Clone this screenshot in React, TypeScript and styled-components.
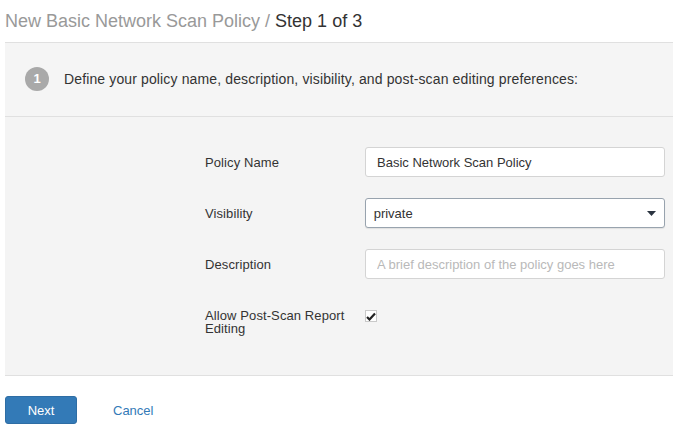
import React from 'react';
import styled, { createGlobalStyle } from 'styled-components';

const GlobalStyle = createGlobalStyle`
  body {
    margin: 0;
    background: #fff;
    font-family: "Liberation Sans", Arial, sans-serif;
    color: #333;
  }
`;

const Page = styled.div`
  padding-left: 5px;
  width: 668px;
`;

const Title = styled.h1`
  margin: 11px 0 11px;
  font-size: 18px;
  line-height: 20px;
  font-weight: normal;
  color: #999;
`;

const Current = styled.span`
  color: #333;
`;

const Panel = styled.div`
  border-top: 1px solid #e0e0e0;
  border-bottom: 1px solid #e0e0e0;
  background: #f4f4f4;
`;

const StepHeader = styled.div`
  display: flex;
  align-items: center;
  height: 74px;
  padding: 0 0 2px 20px;
  box-sizing: border-box;
  background: #f5f5f5;
  border-bottom: 1px solid #e0e0e0;
`;

const StepBadge = styled.span`
  width: 24px;
  height: 24px;
  border-radius: 50%;
  background: #a9a9a9;
  color: #fff;
  font-size: 13px;
  font-weight: bold;
  display: flex;
  align-items: center;
  justify-content: center;
  margin-right: 15px;
`;

const StepText = styled.span`
  font-size: 14px;
  letter-spacing: 0.13px;
`;

const Form = styled.div`
  padding: 30px 8px 40px 200px;
  display: flex;
  flex-direction: column;
  gap: 21px;
`;

const Row = styled.div<{ $top?: boolean }>`
  display: flex;
  align-items: ${p => (p.$top ? 'flex-start' : 'center')};
  padding-top: ${p => (p.$top ? '9px' : '0')};
`;

const Label = styled.label`
  width: 160px;
  padding-right: 16px;
  box-sizing: border-box;
  font-size: 13px;
  line-height: 13px;
  letter-spacing: 0.1px;
`;

const Input = styled.input`
  width: 300px;
  height: 30px;
  box-sizing: border-box;
  border: 1px solid #d4d4d4;
  border-radius: 3px;
  background: #fff;
  padding: 0 11px;
  font-family: "Liberation Sans", Arial, sans-serif;
  font-size: 13px;
  color: #333;
  outline: none;
  &::placeholder {
    color: #b9b9b9;
  }
`;

const Select = styled.div`
  width: 301px;
  height: 30px;
  box-sizing: border-box;
  border: 1px solid #98a3ae;
  border-radius: 3px;
  background: #fff;
  box-shadow: 0 1px 1px rgba(0, 0, 0, 0.08);
  padding: 0 8px 0 8px;
  display: flex;
  align-items: center;
  justify-content: space-between;
  font-size: 13px;
`;

const Check = styled.span`
  width: 12px;
  height: 12px;
  box-sizing: border-box;
  border: 1px solid #c9c9c9;
  background: #fff;
  display: flex;
  align-items: center;
  justify-content: center;
  margin-top: 1px;
`;

const Actions = styled.div`
  display: flex;
  align-items: center;
  margin-top: 20px;
`;

const Primary = styled.button`
  width: 72px;
  height: 28px;
  border: 1px solid #2e6da4;
  border-radius: 3px;
  background: #337ab7;
  color: #fff;
  font-family: "Liberation Sans", Arial, sans-serif;
  font-size: 13px;
`;

const LinkButton = styled.a`
  margin-left: 36px;
  color: #337ab7;
  font-size: 13px;
  text-decoration: none;
`;

export default function App() {
  return (
    <Page>
      <GlobalStyle />
      <Title>
        New Basic Network Scan Policy / <Current>Step 1 of 3</Current>
      </Title>
      <Panel>
        <StepHeader>
          <StepBadge>1</StepBadge>
          <StepText>Define your policy name, description, visibility, and post-scan editing preferences:</StepText>
        </StepHeader>
        <Form>
          <Row>
            <Label>Policy Name</Label>
            <Input readOnly value="Basic Network Scan Policy" />
          </Row>
          <Row>
            <Label>Visibility</Label>
            <Select>
              <span>private</span>
              <svg width="9" height="5" viewBox="0 0 9 5">
                <path d="M0 0h9L4.5 5z" fill="#2b3440" />
              </svg>
            </Select>
          </Row>
          <Row>
            <Label>Description</Label>
            <Input readOnly placeholder="A brief description of the policy goes here" />
          </Row>
          <Row $top>
            <Label>Allow Post-Scan Report Editing</Label>
            <Check>
              <svg width="10" height="9" viewBox="0 0 10 9">
                <path d="M1 5l2.5 2.5L9 1.5" stroke="#222" strokeWidth="2.2" fill="none" />
              </svg>
            </Check>
          </Row>
        </Form>
      </Panel>
      <Actions>
        <Primary>Next</Primary>
        <LinkButton href="#">Cancel</LinkButton>
      </Actions>
    </Page>
  );
}
